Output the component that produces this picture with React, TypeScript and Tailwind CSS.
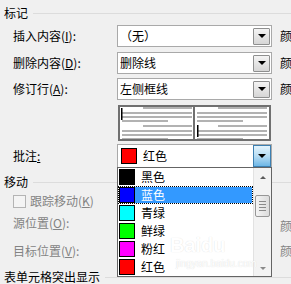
import React from "react";

function Tri() {
  return (
    <div className="w-0 h-0 border-l-[4px] border-r-[4px] border-t-[4px] border-l-transparent border-r-transparent border-t-black" />
  );
}

function DropBtn() {
  return (
    <div className="shrink-0 w-[17px] h-[17px] border border-[#8e8f8f] rounded-[1px] bg-linear-to-b from-[#f4f4f4] to-[#d6d6d6] flex items-center justify-center">
      <Tri />
    </div>
  );
}

function Combo({ text, pad = "pl-[2px]" }: { text: string; pad?: string }) {
  return (
    <div
      className={`shrink-0 w-[155px] h-[22px] bg-white border border-[#a9a9a9] flex items-center justify-between pr-[1px] ${pad}`}
    >
      <span className="leading-[14px] whitespace-nowrap">{text}</span>
      <DropBtn />
    </div>
  );
}

function Header({ text }: { text: string }) {
  return (
    <div className="flex items-center h-[14px] pl-[4px]">
      <span className="shrink-0 leading-[14px] whitespace-nowrap">{text}</span>
      <div className="flex-1 h-px bg-[#dcdcdc] ml-[5px]" />
    </div>
  );
}

function Row({ label, children }: { label: React.ReactNode; children: React.ReactNode }) {
  return (
    <div className="flex items-center h-[22px]">
      <div className="shrink-0 w-[117px] pl-[13px] leading-[14px] whitespace-nowrap">{label}</div>
      {children}
      <span className="shrink-0 ml-[8px] leading-[14px] whitespace-nowrap">颜</span>
    </div>
  );
}

function Preview() {
  const c = "#b2b2b2";
  const para = (y: number, x0: number) => (
    <>
      <rect x={x0 + 21} y={y} width={49} height={2} fill={c} />
      <rect x={x0} y={y + 5} width={70} height={2} fill={c} />
      <rect x={x0} y={y + 9} width={70} height={2} fill={c} />
      <rect x={x0} y={y + 13} width={46} height={2} fill={c} />
    </>
  );
  return (
    <div className="ml-[118px] w-[153px] h-[36px] border-2 border-[#707070] bg-white">
      <svg width="149" height="32" viewBox="0 0 149 32" className="block">
        {para(0, 2)}
        {para(18, 2)}
        <rect x={1} y={1} width={1.5} height={12} fill="#000" />
        <rect x={73} y={0} width={2} height={32} fill="#707070" />
        {para(0, 77)}
        {para(18, 77)}
        <rect x={77} y={18} width={1.5} height={12} fill="#000" />
      </svg>
    </div>
  );
}

const items: { name: string; color: string }[] = [
  { name: "黑色", color: "#000000" },
  { name: "蓝色", color: "#0000ff" },
  { name: "青绿", color: "#00ffff" },
  { name: "鲜绿", color: "#00ff00" },
  { name: "粉红", color: "#ff00ff" },
  { name: "红色", color: "#ff0000" },
];

function DropList() {
  return (
    <div className="absolute left-[117px] top-[167px] w-[155px] h-[110px] border border-[#646464] bg-white flex overflow-hidden">
      <div className="w-[135px] flex flex-col">
        {items.map((it) => {
          const sel = it.name === "蓝色";
          return (
            <div
              key={it.name}
              className={`h-[18px] flex items-center ${sel ? "border border-dotted border-black" : "border border-transparent"}`}
            >
              <div
                className="w-[16px] h-[16px] border border-black shrink-0"
                style={{ backgroundColor: it.color }}
              />
              <div
                className={`flex-1 h-full flex items-center pl-[6px] leading-[14px] ${sel ? "bg-[#3399ff] text-white" : ""}`}
              >
                {it.name}
              </div>
            </div>
          );
        })}
      </div>
      <div className="w-[18px] h-full bg-[#f3f3f3] border-l border-[#e2e2e2] flex flex-col items-center">
        <div className="h-[18px] flex items-center justify-center">
          <div className="w-0 h-0 border-l-[3px] border-r-[3px] border-b-[3px] border-l-transparent border-r-transparent border-b-[#5a5a5a]" />
        </div>
        <div className="mt-[9px] w-[15px] h-[22px] rounded-[2px] border border-[#979797] bg-linear-to-r from-[#f4f4f4] to-[#dcdcdc] flex flex-col items-center justify-center gap-[2px]">
          <div className="w-[7px] h-px bg-[#8a8a8a]" />
          <div className="w-[7px] h-px bg-[#8a8a8a]" />
          <div className="w-[7px] h-px bg-[#8a8a8a]" />
          <div className="w-[7px] h-px bg-[#8a8a8a]" />
        </div>
        <div className="flex-1" />
        <div className="h-[16px] flex items-center justify-center">
          <div className="w-0 h-0 border-l-[3px] border-r-[3px] border-t-[3px] border-l-transparent border-r-transparent border-t-[#8a8a8a]" />
        </div>
      </div>
      <div className="absolute left-[52px] top-[66px] text-[20px] leading-[22px] font-bold text-white [text-shadow:0_0_1px_#d8d8d8] font-['Liberation_Sans',sans-serif] pointer-events-none whitespace-nowrap">
        Baidu
      </div>
      <div className="absolute left-[58px] top-[90px] text-[10px] leading-[12px] text-white [text-shadow:0_0_1px_#d0d0d0] font-['Liberation_Sans',sans-serif] pointer-events-none whitespace-nowrap">
        jingyan.baidu.com
      </div>
    </div>
  );
}

export default function App() {
  return (
    <div className="relative w-[291px] h-[284px] overflow-hidden bg-[#f0f0f0] text-[12px] text-black font-['Noto_Sans_CJK_SC','Noto_Sans',sans-serif]">
      <div className="flex flex-col">
        <div className="mt-[6px]">
          <Header text="标记" />
        </div>
        <div className="mt-[5px]">
          <Row label={<>插入内容(<u>I</u>):</>}>
            <Combo text="（无）" />
          </Row>
        </div>
        <div className="mt-[5px]">
          <Row label={<>删除内容(<u>D</u>):</>}>
            <Combo text="删除线" />
          </Row>
        </div>
        <div className="mt-[4px]">
          <Row label={<>修订行(<u>A</u>):</>}>
            <Combo text="左侧框线" />
          </Row>
        </div>
        <div className="mt-[5px]">
          <Preview />
        </div>
        <div className="mt-[3px] flex items-center h-[24px]">
          <div className="shrink-0 w-[117px] pl-[13px] leading-[14px] whitespace-nowrap">
            批注<u>:</u>
          </div>
          <div className="shrink-0 w-[155px] h-[24px] bg-white border border-[#a9a9a9] flex items-center justify-between pl-[3px]">
            <div className="flex items-center">
              <div className="w-[16px] h-[16px] border border-black bg-[#ff0000]" />
              <span className="ml-[6px] leading-[14px]">红色</span>
            </div>
            <div className="w-[18px] h-[22px] border border-[#3c7fb1] bg-linear-to-b from-[#e3f3fc] via-[#b6dcf3] to-[#6db7e6] flex items-center justify-center">
              <Tri />
            </div>
          </div>
        </div>
        <div className="mt-[7px]">
          <Header text="移动" />
        </div>
        <div className="mt-[5px] h-[14px] flex items-center pl-[13px] text-[#838383]">
          <div className="shrink-0 w-[13px] h-[13px] border border-[#b4b4b4] bg-[#f4f4f4]" />
          <span className="ml-[4px] leading-[14px] whitespace-nowrap">跟踪移动(<u>K</u>)</span>
        </div>
        <div className="mt-[7px] flex h-[22px] items-center">
          <div className="shrink-0 w-[117px] pl-[13px] self-start pt-[1px] leading-[14px] text-[#838383] whitespace-nowrap">
            源位置(<u>O</u>):
          </div>
          <div className="shrink-0 w-[155px]" />
          <span className="shrink-0 ml-[8px] leading-[14px] text-[#838383] whitespace-nowrap">颜</span>
        </div>
        <div className="mt-[3px] flex h-[22px] items-center">
          <div className="shrink-0 w-[117px] pl-[13px] leading-[14px] text-[#838383] whitespace-nowrap">
            目标位置(<u>V</u>):
          </div>
          <div className="shrink-0 w-[155px]" />
          <span className="shrink-0 ml-[8px] leading-[14px] text-[#838383] whitespace-nowrap">颜</span>
        </div>
        <div className="mt-[8px]">
          <Header text="表单元格突出显示" />
        </div>
      </div>
      <DropList />
    </div>
  );
}
